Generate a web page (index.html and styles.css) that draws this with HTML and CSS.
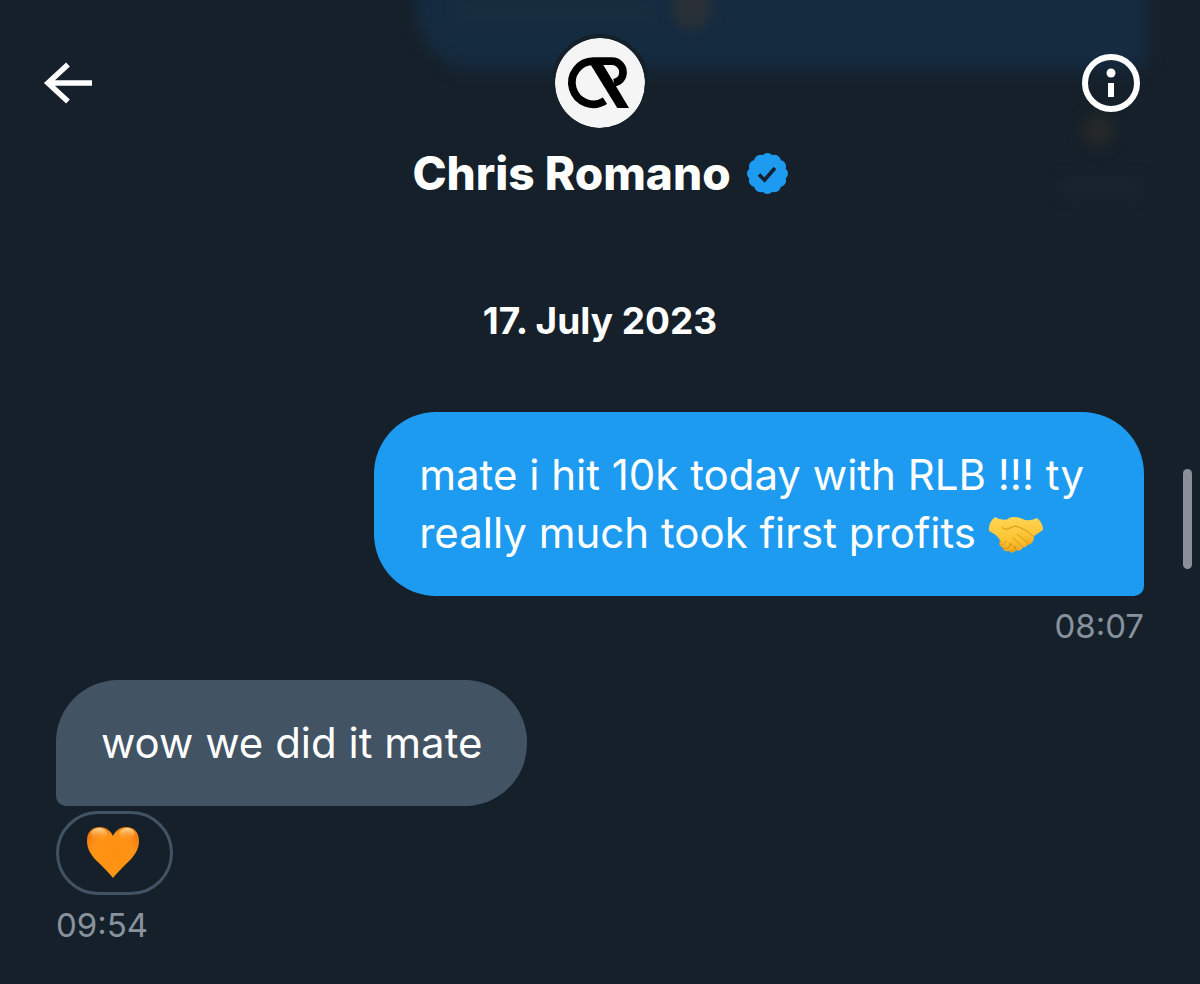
FILE: index.html
```
<!DOCTYPE html>
<html lang="en">
<head>
<meta charset="utf-8">
<meta name="viewport" content="width=device-width, initial-scale=1">
<title>Chris Romano</title>
<link rel="stylesheet" href="styles.css">
</head>
<body>
<div class="backdrop" aria-hidden="true">
  <div class="ghost-bubble"></div>
  <div class="ghost-text"></div>
  <div class="ghost-heart"></div>
  <div class="ghost-reaction"></div>
  <div class="ghost-time"></div>
</div>
<header class="header">
  <button class="icon-button icon-button-start" type="button" aria-label="Back">
    <svg class="back-icon" viewBox="0 0 50 42"><path d="M25 2.500L5 21L25 39.500M4 21H49" fill="none" stroke="#fff" stroke-width="5.500"/></svg>
  </button>
  <div class="profile">
    <svg class="avatar" viewBox="0 0 90 90" role="img" aria-label="Chris Romano avatar">
      <circle cx="45" cy="45" r="45" fill="#f5f5f5"/>
      <path d="M50 62.800A21.500 21.500 0 1 1 38.500 23.200H57A11 11 0 0 1 68 34.200C68 39.500 65 43.500 59 44.700" fill="none" stroke="#000" stroke-width="7.700"/>
      <path d="M34 24H46.500L74 70H62.300Z"/>
    </svg>
    <div class="name-row">
      <h1 class="name">Chris Romano</h1>
      <svg class="badge" viewBox="0 0 41 41" role="img" aria-label="Verified">
        <circle cx="20.500" cy="20.500" r="14" pathLength="12" fill="#1d9bf0" stroke="#1d9bf0" stroke-width="13" stroke-linecap="round" stroke-dasharray="0 1"/>
        <path d="M12 21.500L17.500 27L28 15" fill="none" stroke="#16202a" stroke-width="3.600"/>
      </svg>
    </div>
  </div>
  <button class="icon-button icon-button-end" type="button" aria-label="Conversation info">
    <svg class="info-icon" viewBox="0 0 58 58"><circle cx="29" cy="29" r="26" fill="none" stroke="#fff" stroke-width="6"/><circle cx="29" cy="19" r="4.500" fill="#fff"/><path d="M26 29h6v14h-6z" fill="#fff"/></svg>
  </button>
</header>
<main class="thread">
  <h2 class="date">17. July 2023</h2>
  <article class="message sent">
    <p class="bubble">mate i hit 10k today with RLB !!! ty<br>really much took first profits <svg class="handshake" viewBox="0 0 56 38" role="img" aria-label="handshake">
      <defs>
        <linearGradient id="skin" x1="0" y1="0" x2="0" y2="1"><stop offset="0" stop-color="#ffd655"/><stop offset=".6" stop-color="#fdc535"/><stop offset="1" stop-color="#f0a91a"/></linearGradient>
      </defs>
      <path d="M7 1Q13 5 22 3L34 12L40 27Q39 32 35 31Q33 36 28 34Q25 39 21 35Q16 36 15 32Q10 30 12 25Q11 20 1 15Q0 7 7 1Z" fill="url(#skin)"/>
      <path d="M13 25Q10 28 14 30L18 25M16 31Q16 35 20 32L23 28M22 34Q24 37 27 33L28 30" fill="none" stroke="#d68f16" stroke-width="1" stroke-linecap="round"/>
      <path d="M49 2Q43 5 37 4Q27-1 21 2Q16 6 14 11Q16 15 22 12L27 10Q31 18 40 29Q46 28 46 20L55 14Q55 7 49 2Z" fill="url(#skin)"/>
      <path d="M14 11Q16 15 22 12L27 10Q36 12 45 20M29 18Q35 23 40 28M25 22Q31 27 35 31M22 27L28 33" fill="none" stroke="#d99418" stroke-width="1" stroke-linecap="round"/>
    </svg></p>
    <time class="time" datetime="08:07">08:07</time>
  </article>
  <article class="message received">
    <p class="bubble">wow we did it mate</p>
    <button class="reaction" type="button" aria-label="Orange heart reaction">
      <svg class="heart" viewBox="0 0 54 52">
        <defs>
          <radialGradient id="heart-fill" cx=".5" cy=".55" r=".6"><stop offset="0" stop-color="#ff9010"/><stop offset=".65" stop-color="#ff9416"/><stop offset="1" stop-color="#f37b12"/></radialGradient>
          <linearGradient id="heart-shine" x1="0" y1="0" x2="0" y2="1"><stop offset="0" stop-color="#ffe0a0"/><stop offset="1" stop-color="#ffa02a" stop-opacity="0"/></linearGradient>
        </defs>
        <path d="M27 52Q24 48 14 38C5 30 1 23 1 15C1 6 6 1 14 1C20 1 25 5 27 10C29 5 34 1 40 1C48 1 53 6 53 15C53 23 49 30 40 38Q30 48 27 52Z" fill="url(#heart-fill)"/>
        <ellipse cx="13" cy="8" rx="8" ry="6" fill="url(#heart-shine)"/>
        <ellipse cx="41" cy="8" rx="8" ry="6" fill="url(#heart-shine)"/>
      </svg>
    </button>
    <time class="time" datetime="09:54">09:54</time>
  </article>
</main>
<div class="scroll-thumb" aria-hidden="true"></div>
</body>
</html>
```
FILE: styles.css
```
* {
  box-sizing: border-box;
}

body {
  position: relative;
  margin: 0;
  min-height: 100vh;
  overflow-x: hidden;
  background: #16202a;
  color: #fff;
  font-family: Inter, "Liberation Sans", sans-serif;
}

h1, h2, p {
  margin: 0;
}

button {
  padding: 0;
  border: 0;
  background: none;
  cursor: pointer;
}

svg {
  display: block;
}

/* Messages scrolled under the translucent header */
.backdrop {
  position: absolute;
  inset: 0 0 auto;
  height: 224px;
  overflow: hidden;
}

.backdrop > div {
  position: absolute;
}

.ghost-bubble {
  top: -60px;
  right: 52px;
  width: 61%;
  height: 130px;
  border-radius: 0 0 12px 60px;
  background: #152b40;
  filter: blur(8px);
}

.ghost-text {
  top: 0;
  left: 38%;
  width: 200px;
  height: 22px;
  background: #192d3e;
  filter: blur(6px);
}

.ghost-heart {
  top: -16px;
  left: 672px;
  width: 40px;
  height: 46px;
  border-radius: 50%;
  background: #2a3036;
  filter: blur(7px);
}

.ghost-reaction {
  top: 114px;
  right: 86px;
  width: 32px;
  height: 32px;
  border-radius: 50%;
  background: #252928;
  filter: blur(7px);
}

.ghost-time {
  top: 176px;
  right: 58px;
  width: 80px;
  height: 22px;
  background: #19232e;
  filter: blur(6px);
}

.header {
  position: relative;
  display: grid;
  grid-template-columns: 1fr auto 1fr;
  align-items: start;
  padding: 38px 60px 0;
}

.icon-button {
  display: flex;
  align-items: center;
  height: 90px;
}

.icon-button-start {
  justify-self: start;
  margin-left: -17px;
}

.icon-button-end {
  justify-self: end;
}

.back-icon {
  width: 50px;
  height: 42px;
}

.info-icon {
  width: 58px;
  height: 58px;
}

.profile {
  display: flex;
  flex-direction: column;
  align-items: center;
  gap: 16px;
}

.avatar {
  width: 90px;
  height: 90px;
  border-radius: 50%;
  box-shadow: 0 0 0 4px #16202a;
}

.name-row {
  display: flex;
  align-items: center;
  gap: 16px;
}

.name {
  font-size: 46px;
  line-height: 58px;
  font-weight: 800;
}

.badge {
  width: 41px;
  height: 41px;
}

.thread {
  display: flex;
  flex-direction: column;
  padding: 90px 56px 32px;
}

.date {
  align-self: center;
  margin-bottom: 62px;
  font-size: 37px;
  line-height: 58px;
  font-weight: 700;
}

.message {
  display: flex;
  flex-direction: column;
}

.sent {
  align-items: flex-end;
  margin-bottom: 34px;
}

.received {
  align-items: flex-start;
}

.bubble {
  padding: 34px 45px;
  font-size: 42px;
  line-height: 58px;
}

.sent .bubble {
  padding-right: 60px;
  border-radius: 62px 62px 10px 62px;
  background: #1d9bf0;
}

.received .bubble {
  border-radius: 62px 62px 62px 10px;
  background: #425364;
}

.handshake {
  display: inline-block;
  width: 56px;
  height: 38px;
  vertical-align: -6px;
}

.time {
  color: #87929e;
  font-size: 33px;
  line-height: 40px;
}

.sent .time {
  margin-top: 10px;
}

.received .time {
  margin-top: 10px;
}

.reaction {
  display: flex;
  align-items: center;
  justify-content: center;
  width: 117px;
  height: 84px;
  margin-top: 5px;
  padding: 0 4px 2px 0;
  border: 3px solid #425364;
  border-radius: 42px;
}

.heart {
  width: 54px;
  height: 52px;
}

.scroll-thumb {
  position: absolute;
  top: 469px;
  right: 8px;
  width: 9px;
  height: 100px;
  border-radius: 5px;
  background: #8b8f9a;
}
```
